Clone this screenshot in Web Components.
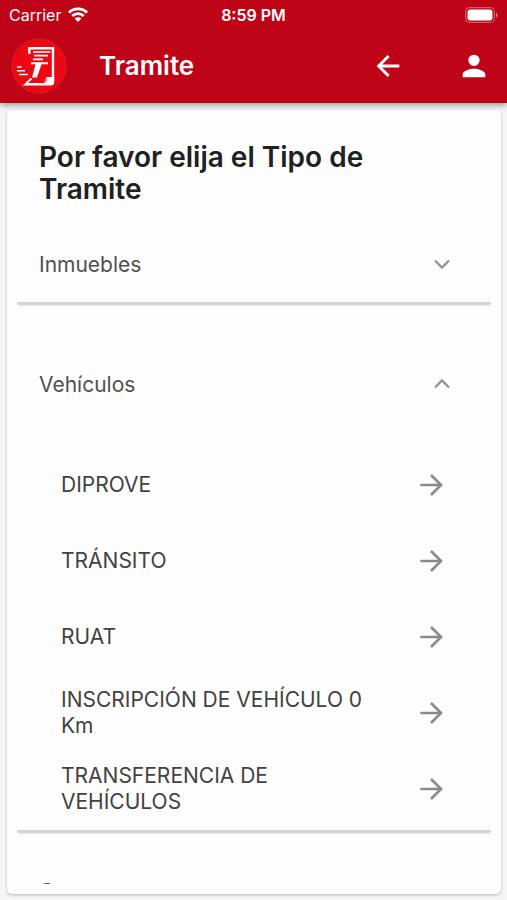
<!DOCTYPE html>
<html lang="es">
<head>
<meta charset="utf-8">
<meta name="viewport" content="width=device-width, initial-scale=1">
<title>Tramite</title>
<style>
  html, body {
    height: 100%;
    margin: 0;
  }

  body {
    font-family: Inter, "Liberation Sans", sans-serif;
    background: #f5f5f5;
    color: #212121;
  }
</style>
</head>
<body>
<tramite-app>
  <status-bar slot="top" carrier="Carrier" time="8:59 PM"></status-bar>
  <app-bar slot="top">Tramite</app-bar>
  <tramite-card>
    <span slot="title">Por favor elija el Tipo de Tramite</span>
    <expansion-panel label="Inmuebles"></expansion-panel>
    <expansion-panel label="Vehículos" open>
      <tramite-item>DIPROVE</tramite-item>
      <tramite-item>TRÁNSITO</tramite-item>
      <tramite-item>RUAT</tramite-item>
      <tramite-item>INSCRIPCIÓN DE VEHÍCULO 0 Km</tramite-item>
      <tramite-item>TRANSFERENCIA DE VEHÍCULOS</tramite-item>
    </expansion-panel>
    <expansion-panel label="Contratos"></expansion-panel>
  </tramite-card>
</tramite-app>

<script>
const define = (name, html, setup) => customElements.define(name, class extends HTMLElement {
  constructor() {
    super()
    this.attachShadow({ mode: 'open' })
    this.shadowRoot.innerHTML = html
    setup?.(this, this.shadowRoot)
  }
})

define('tramite-app', `
<style>
  :host {
    display: flex;
    flex-direction: column;
    height: 100%;
  }

  header {
    position: relative;
    flex: none;
    background: #c00418;
    color: #fff;
    box-shadow: 0 2px 6px rgba(0, 0, 0, .4);
  }

  main {
    display: flex;
    flex: 1;
    min-height: 0;
    padding: 7px 6px 6px 7px;
  }
</style>
<header><slot name="top"></slot></header>
<main><slot></slot></main>
`)

define('status-bar', `
<style>
  :host {
    display: grid;
    grid-template-columns: 1fr auto 1fr;
    align-items: center;
    height: 29px;
    padding: 0 9px;
    font-size: 16px;
  }

  div {
    display: flex;
    align-items: center;
    gap: 7px;
  }

  .time {
    font-weight: 600;
  }

  .battery {
    justify-content: flex-end;
  }

  svg {
    display: block;
  }
</style>
<div><span class="carrier"></span>
  <svg width="20" height="15" viewBox="0 0 20 15" fill="none" stroke="#fff" stroke-width="2.9" aria-hidden="true">
    <path d="M1 5.6a12.8 12.8 0 0 1 18 0M4.3 9a8.1 8.1 0 0 1 11.4 0"/>
    <path d="M10 15 6.6 11.5a4.9 4.9 0 0 1 6.8 0z" fill="#fff" stroke="none"/>
  </svg>
</div>
<span class="time"></span>
<div class="battery">
  <svg width="33" height="16" viewBox="0 0 33 16" aria-hidden="true">
    <rect x=".6" y=".6" width="28.8" height="14.8" rx="4.5" fill="none" stroke="#fff" stroke-opacity=".35" stroke-width="1.2"/>
    <rect x="2.5" y="2.5" width="25" height="11" rx="3" fill="#fff"/>
    <path d="M31 5.5c2 .8 2 4.2 0 5z" fill="#fff" fill-opacity=".5"/>
  </svg>
</div>
`, (host, root) => {
  root.querySelector('.carrier').textContent = host.getAttribute('carrier')
  root.querySelector('.time').textContent = host.getAttribute('time')
})

define('app-bar', `
<style>
  :host {
    display: flex;
    align-items: center;
    height: 74px;
    padding: 0 11px;
  }

  .logo {
    flex: none;
    display: block;
    margin-right: 32px;
  }

  h1 {
    flex: 1;
    margin: 0;
    font-size: 26px;
    font-weight: 600;
    line-height: 32px;
  }

  nav {
    display: flex;
    gap: 42px;
  }

  button {
    display: grid;
    place-items: center;
    width: 44px;
    height: 44px;
    padding: 0;
    border: 0;
    background: none;
    color: inherit;
  }
</style>
<svg class="logo" width="56" height="56" viewBox="0 0 56 56" aria-hidden="true">
  <circle cx="28" cy="28" r="27" fill="#ec0712" stroke="#e02a38" stroke-dasharray="2 1"/>
  <path d="M18.3 16v-5.8H42V43" fill="none" stroke="#fff" stroke-width="2.4"/>
  <path d="M11.5 47.500l3.500-2.500H33l2-6h8.200v5c0 2.500-1.200 3.500-3.500 3.500z" fill="#fff"/>
  <path d="M31 44.600h2.500l1.500-1.500v-4.500" fill="none" stroke="#ec0712"/>
  <path d="M22 14h17.500M23 17.700h14M22 21.300h10" fill="none" stroke="#fff" stroke-width="1.7"/>
  <path d="M20 24.300h17v2h-6.500L26 39.500h-5l3.500-13.200H20z" fill="#fff"/>
  <path d="M20.500 40.500l-6 5.500" fill="none" stroke="#fff" stroke-width="1.8"/>
  <path d="M6 29h4.500M6 32.700h8M8 36.500h9" fill="none" stroke="#fff" stroke-width="1.6"/>
</svg>
<h1><slot></slot></h1>
<nav>
  <button aria-label="Volver">
    <svg width="32" height="32" viewBox="0 0 24 24" fill="none" stroke="#fff" stroke-width="2.2"><path d="M20.500 12H5M12.500 4.500 5 12l7.500 7.500"/></svg>
  </button>
  <button aria-label="Perfil">
    <svg width="34" height="34" viewBox="0 0 24 24" fill="#fff"><path d="M12 12a4 4 0 1 0 0-8 4 4 0 0 0 0 8zm0 2c-2.670 0-8 1.340-8 4v2h16v-2c0-2.660-5.330-4-8-4z"/></svg>
  </button>
</nav>
`)

define('tramite-card', `
<style>
  :host {
    box-sizing: border-box;
    flex: 1;
    min-width: 0;
    padding: 10px;
    border-radius: 5px;
    background: #fdfdfd;
    box-shadow: 0 1px 3px rgba(0, 0, 0, .25);
  }

  section {
    height: 100%;
    overflow: hidden;
  }

  h2 {
    margin: 0;
    padding: 21px 44px 21px 22px;
    font-size: 28px;
    font-weight: 600;
    line-height: 32px;
  }
</style>
<section>
  <h2><slot name="title"></slot></h2>
  <slot></slot>
</section>
`)

define('expansion-panel', `
<style>
  :host {
    display: block;
    margin-bottom: 20px;
    background: #fdfdfd;
    border-bottom: 3px solid #d3d3d3;
    border-radius: 2px;
    box-shadow: 0 1px 2px rgba(0, 0, 0, .08);
  }

  button {
    display: flex;
    align-items: center;
    justify-content: space-between;
    width: 100%;
    height: 76px;
    padding: 0 38px 0 22px;
    border: 0;
    background: none;
    color: #505050;
    font: inherit;
    font-size: 21px;
    text-align: left;
  }

  :host([open]) button {
    height: 118px;
  }

  :host([open]) svg {
    transform: rotate(180deg);
  }

  .content {
    display: none;
  }

  :host([open]) .content {
    display: block;
    padding: 4px 0 3px;
  }
</style>
<button>
  <span></span>
  <svg width="22" height="22" viewBox="0 0 22 22" fill="none" stroke="#949494" stroke-width="2.3" aria-hidden="true"><path d="M4 7.500l7 7 7-7"/></svg>
</button>
<div class="content"><slot></slot></div>
`, (host, root) => {
  const button = root.querySelector('button')
  root.querySelector('span').textContent = host.getAttribute('label')
  button.setAttribute('aria-expanded', host.hasAttribute('open'))
  button.addEventListener('click', () => {
    button.setAttribute('aria-expanded', host.toggleAttribute('open'))
  })
})

define('tramite-item', `
<style>
  :host {
    display: block;
  }

  button {
    display: flex;
    align-items: center;
    justify-content: space-between;
    gap: 32px;
    width: 100%;
    height: 76px;
    padding: 0 44px;
    border: 0;
    background: none;
    color: #424242;
    font: inherit;
    font-size: 21px;
    line-height: 26px;
    text-align: left;
  }

  svg {
    flex: none;
  }
</style>
<button>
  <span><slot></slot></span>
  <svg width="32" height="32" viewBox="0 0 24 24" fill="none" stroke="#8a8a8a" stroke-width="2" aria-hidden="true"><path d="M4 12h15M12 4.500l7.500 7.500-7.500 7.500"/></svg>
</button>
`)
</script>
</body>
</html>
